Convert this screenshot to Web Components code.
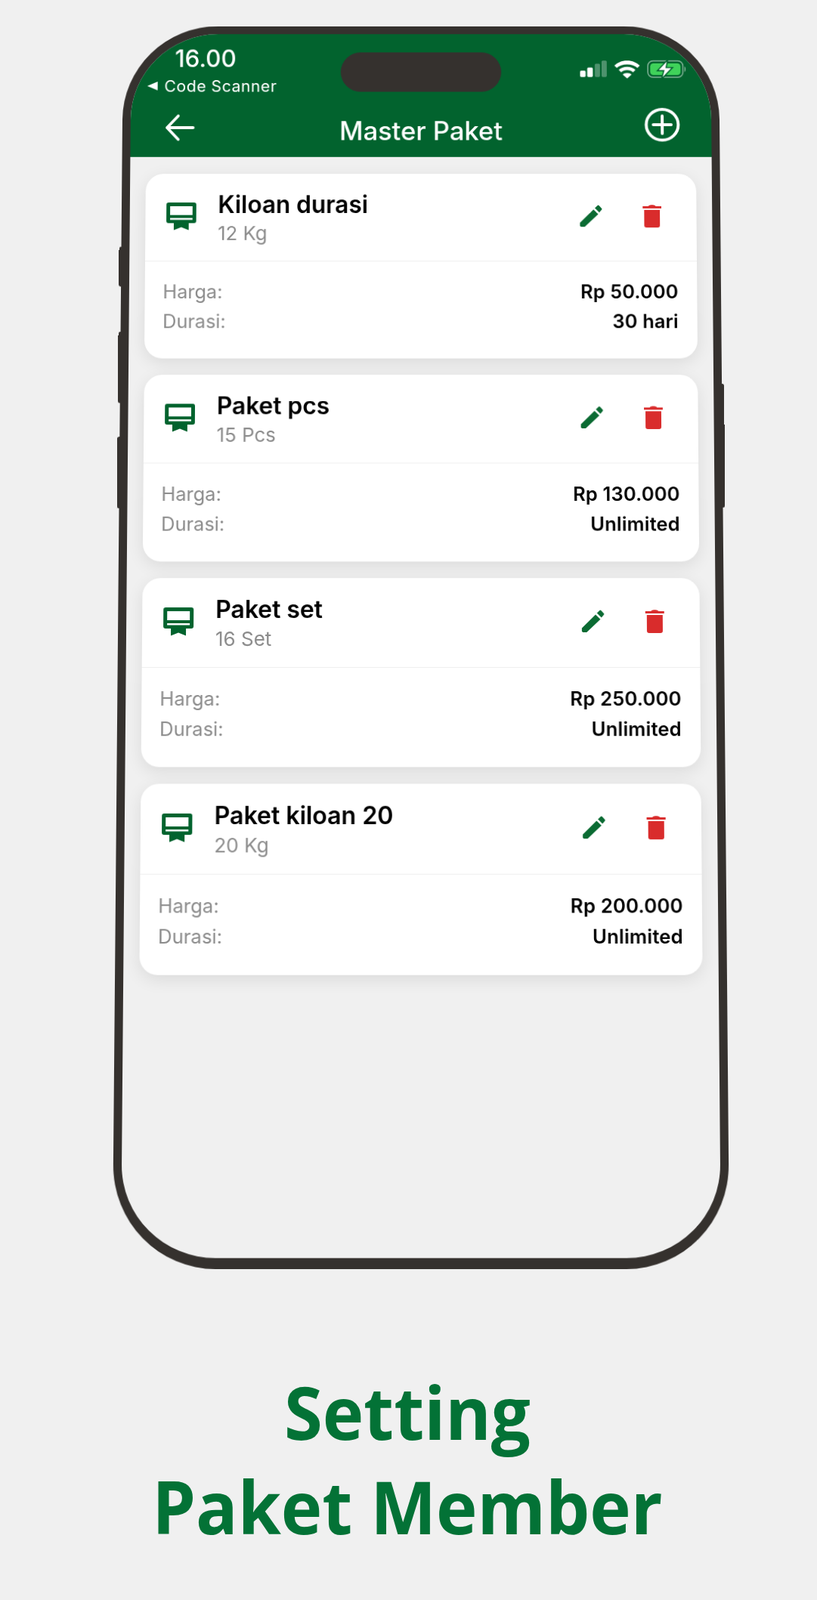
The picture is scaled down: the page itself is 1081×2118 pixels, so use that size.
<!DOCTYPE html>
<html lang="id"><head><meta charset="utf-8"><style>
html,body{margin:0;background:#f0f0f0}
body{width:1081px;height:2118px;overflow:hidden;font-family:Inter,"Liberation Sans",sans-serif}
</style></head><body>
<promo-page>
 <phone-frame>
  <app-header slot="header"></app-header>
  <paket-card name="Kiloan durasi" qty="12 Kg" price="Rp 50.000" dur="30 hari"></paket-card>
  <paket-card name="Paket pcs" qty="15 Pcs" price="Rp 130.000" dur="Unlimited"></paket-card>
  <paket-card name="Paket set" qty="16 Set" price="Rp 250.000" dur="Unlimited"></paket-card>
  <paket-card name="Paket kiloan 20" qty="20 Kg" price="Rp 200.000" dur="Unlimited"></paket-card>
 </phone-frame>
 <promo-title>Setting<br>Paket Member</promo-title>
</promo-page>
<script>
function def(name,html){
 customElements.define(name,class extends HTMLElement{
  constructor(){super();this.attachShadow({mode:'open'});}
  connectedCallback(){
   let h=html; for(const a of this.getAttributeNames()) h=h.split('{{'+a+'}}').join(this.getAttribute(a));
   this.shadowRoot.innerHTML=h;
  }
 });
}
def('promo-page',`<style>:host{display:flex;flex-direction:column;align-items:center;width:1081px;height:2118px}</style><slot></slot>`);
def('phone-frame',`<style>
:host{display:block;box-sizing:border-box;width:802px;height:1647px;margin:19px 0 0 32px;position:relative;
 background:#f0f0f0;border:11px solid #35312e;border-bottom-width:14px;border-radius:128px 128px 134px 134px;
 transform:perspective(2400px) rotateX(3deg);transform-origin:50% 50%}
.clip{height:100%;border-radius:117px 117px 121px 121px;overflow:hidden;display:flex;flex-direction:column}
.list{display:flex;flex-direction:column;gap:22px;padding:23px 21px 0}
.island{position:absolute;top:25px;left:50%;margin-left:-108px;width:216px;height:54px;border-radius:27px;background:#35312e}
.btn{position:absolute;background:#35312e;width:3px}
.l1{left:-14px;top:290px;height:54px;border-radius:3px 0 0 3px}
.l2{left:-14px;top:405px;height:96px;border-radius:3px 0 0 3px}
.l3{left:-14px;top:546px;height:96px;border-radius:3px 0 0 3px}
.r1{right:-14px;top:475px;height:166px;border-radius:0 3px 3px 0}
</style>
<div class="btn l1"></div><div class="btn l2"></div><div class="btn l3"></div><div class="btn r1"></div>
<div class="clip"><slot name="header"></slot><div class="list"><slot></slot></div></div><div class="island"></div>`);
def('app-header',`<style>
:host{display:block;height:168px;background:#02632e;color:#fff;position:relative;flex:none}
.status{position:absolute;left:59px;top:15px;font-size:32px;font-weight:500;line-height:38px}
.back{position:absolute;left:22px;top:58px;font-size:21.5px;line-height:26px;letter-spacing:.55px;display:flex;align-items:center;gap:9px}
.tri{width:0;height:0;border:6px solid transparent;border-right:14px solid #fff;border-left:0}
.row{position:absolute;left:0;right:0;top:112px;text-align:center;font-size:35px;font-weight:500;line-height:40px}
svg{position:absolute;display:block}
</style>
<div class="status">16.00</div>
<div class="back"><span class="tri"></span><span>Code Scanner</span></div>
<svg style="left:46px;top:109px" width="40" height="40" viewBox="0 0 40 40" fill="none" stroke="#fff" stroke-width="3.8" stroke-linecap="round" stroke-linejoin="round"><path d="M3 19H38M18 3 3 19 18 35"/></svg>
<div class="row">Master Paket</div>
<svg style="right:42px;top:101px" width="48" height="46" viewBox="0 0 48 46" fill="none" stroke="#fff" stroke-width="4" stroke-linecap="round"><ellipse cx="24" cy="23" rx="21.5" ry="21"/><path d="M24 11V35M12 23H36"/></svg>
<svg style="right:28px;top:35px" width="148" height="28" viewBox="0 0 138 26">
 <g fill="#fff"><rect x="0" y="14" width="7" height="8" rx="1.5"/><rect x="9" y="10" width="7" height="12" rx="1.5"/></g>
 <g fill="#fff" opacity=".3"><rect x="18.500" y="5" width="6.500" height="17" rx="1.5"/><rect x="27" y="1" width="6.500" height="21" rx="1.500"/></g>
 <path fill="#fff" d="M59 1c-7 0-12 2.500-16 6.500l3 3C49 7.500 54 6 59 6s10 1.500 13 4.500l3-3C71 3.500 66 1 59 1zm0 8c-4.500 0-8 1.500-10.500 4l3 3c2-1.800 4.500-2.800 7.500-2.800s5.500 1 7.500 2.800l3-3C67 10.500 63.500 9 59 9zm0 8c-2.500 0-4.500 .8-5.500 2L59 24l5.500-5c-1-1.200-3-2-5.500-2z"/>
 <rect x="85" y="1.500" width="44" height="21" rx="6.500" fill="none" stroke="#fff" stroke-opacity=".45" stroke-width="1.600"/>
 <rect x="88" y="4.500" width="38" height="15" rx="4" fill="#3fd25a"/>
 <path d="M131 8.500c2 .5 2 6.500 0 7z" fill="#fff" opacity=".5"/>
 <path fill="#fff" stroke="#02632e" stroke-width="1.500" d="M110 0 97 14h8l-3 11 14-15h-8z"/>
</svg>`);
def('paket-card',`<style>
:host{display:block;background:#fff;border-radius:24px;box-shadow:0 6px 22px rgba(0,0,0,.09);color:#000}
.top{height:119px;position:relative;border-bottom:1.500px solid #efefef;box-sizing:border-box;display:flex;align-items:flex-start}
.ic{width:40px;height:38px;margin:39px 0 0 28px;flex:none}
.txt{margin:23px 0 0 29px;flex:1}
.name{font-size:32px;font-weight:600;line-height:38px;letter-spacing:-.05px}
.qty{font-size:26px;line-height:32px;color:#8c8c8c;margin-top:4px}
.act{display:flex;gap:54px;align-items:center;margin:42px 47px 0 0}
.pen{width:31px;height:31px;display:block}
.bin{width:25px;height:31px;display:block}
.bot{padding:25px 25px 35px 24px;display:grid;grid-template-columns:1fr auto;row-gap:9px;font-size:25.5px;line-height:31px}
.k{color:#8c8c8c}.v{font-weight:600;text-align:right;letter-spacing:.2px}
</style>
<div class="top">
 <svg class="ic" viewBox="0 0 40 38"><path fill="#02632e" fill-rule="evenodd" d="M3 0H37a3 3 0 0 1 3 3V25a3 3 0 0 1-3 3H30V37.500L20 33.500 10 37.500V28H3a3 3 0 0 1-3-3V3a3 3 0 0 1 3-3zM5 5V17H35V5zM5 21V23.500H35V21z"/></svg>
 <div class="txt"><div class="name">{{name}}</div><div class="qty">{{qty}}</div></div>
 <div class="act">
  <svg class="pen" viewBox="0 0 34 34"><path fill="#0b6b33" d="M1 27 21 7l7 7L8 33H2.500L1 31.500zM23 5l4-4a1.500 1.500 0 0 1 2 0l4 4.500a1.500 1.500 0 0 1 0 2l-3.500 4z"/></svg>
  <svg class="bin" viewBox="0 0 25 31"><path fill="#d92c2c" d="M8.500 1C9.500 0 15.500 0 16.500 1L17.500 2H25V5H0V2H7.500zM2 7H23V28a3 3 0 0 1-3 3H5a3 3 0 0 1-3-3z"/></svg>
 </div>
</div>
<div class="bot"><div class="k">Harga:</div><div class="v">{{price}}</div><div class="k">Durasi:</div><div class="v">{{dur}}</div></div>`);
def('promo-title',`<style>
:host{display:block;margin-top:140px;padding-right:3px;font-family:"Open Sans",sans-serif;font-weight:700;font-size:96px;line-height:125px;color:#037236;text-align:center;white-space:nowrap;transform:scaleX(.96)}
</style><slot></slot>`);
</script>
</body></html>
